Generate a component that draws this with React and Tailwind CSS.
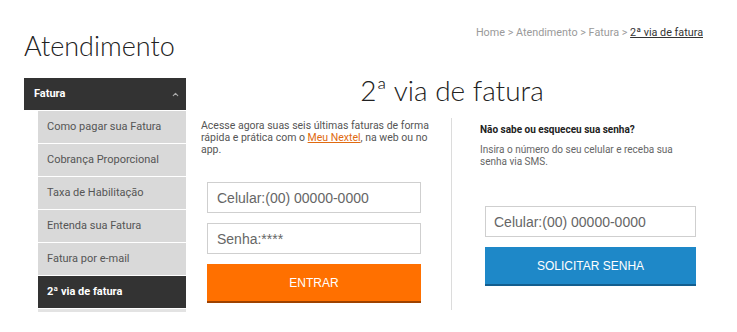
import { ChevronUp } from 'lucide-react';

const itens = [
  'Como pagar sua Fatura',
  'Cobrança Proporcional',
  'Taxa de Habilitação',
  'Entenda sua Fatura',
  'Fatura por e-mail',
];

export default function App() {
  return (
    <div className="w-[737px] h-[332px] overflow-hidden bg-white font-['Roboto',sans-serif]">
      <div className="pl-[24px] pr-[34px]">
        <div className="flex justify-between items-start pt-[26px] h-[78px]">
          <h1 className="font-['Lato',sans-serif] font-light text-[27px] leading-none text-[#222] mt-[6px]">Atendimento</h1>
          <div className="text-[10.8px] leading-[13px] text-[#9a9a9a] font-['Roboto',sans-serif]">
            Home &gt; Atendimento &gt; Fatura &gt;{' '}
            <a className="text-[#333] underline">2ª via de fatura</a>
          </div>
        </div>

        <div className="flex">
          <aside className="w-[162px] shrink-0">
            <div className="h-[32px] bg-[#333333] flex items-center justify-between pl-[10px] pr-[6px]">
              <span className="text-white text-[11px] font-bold">Fatura</span>
              <ChevronUp size={9} strokeWidth={3} className="text-[#aaa]" />
            </div>
            <ul className="ml-[14px]">
              {itens.map((t) => (
                <li key={t} className="h-[33px] bg-[#d9d9d9] border-t border-white flex items-center pl-[9px] text-[11px] text-[#555]">
                  {t}
                </li>
              ))}
              <li className="h-[33px] bg-[#333333] border-t border-white flex items-center pl-[9px] text-[11px] font-bold text-white">
                2ª via de fatura
              </li>
              <li className="h-[4px] bg-[#e3e3e3] border-t border-white"></li>
            </ul>
          </aside>

          <main className="flex-1 ml-[15px]">
            <h2 className="text-center font-['Lato',sans-serif] font-light text-[28px] leading-none text-[#222] -mt-[2px] h-[42px]">
              2ª via de fatura
            </h2>
            <div className="flex">
              <div className="w-[251px] border-r border-[#dcdcdc] h-[192px]">
                <p className="text-[10.5px] leading-[12px] text-[#555] pt-[2px] pr-[8px]">
                  Acesse agora suas seis últimas faturas de forma rápida e prática com o{' '}
                  <a className="text-[#e06a10] underline">Meu Nextel</a>, na web ou no app.
                </p>
                <div className="ml-[6px] w-[214px] mt-[26px] flex flex-col font-['Liberation_Sans',sans-serif]">
                  <input
                    className="h-[31px] border border-[#cfcfcf] px-[9px] text-[14px] text-[#666] placeholder:text-[#666] outline-none"
                    placeholder="Celular:(00) 00000-0000"
                  />
                  <input
                    className="h-[31px] mt-[10px] border border-[#cfcfcf] px-[9px] text-[14px] text-[#666] placeholder:text-[#666] outline-none"
                    placeholder="Senha:****"
                  />
                  <button className="h-[39px] mt-[10px] bg-[#ff7000] border-b-[2px] border-[#9e4200] text-white text-[12px]">
                    ENTRAR
                  </button>
                </div>
              </div>
              <div className="flex-1 pl-[28px]">
                <h3 className="text-[10px] font-bold text-[#222] pt-[6px] leading-[12px]">Não sabe ou esqueceu sua senha?</h3>
                <p className="text-[10px] leading-[12px] text-[#666] mt-[8px] pr-[20px]">
                  Insira o número do seu celular e receba sua senha via SMS.
                </p>
                <div className="ml-[5px] w-[211px] mt-[38px] flex flex-col font-['Liberation_Sans',sans-serif]">
                  <input
                    className="h-[31px] border border-[#cfcfcf] px-[8px] text-[14px] text-[#666] placeholder:text-[#666] outline-none"
                    placeholder="Celular:(00) 00000-0000"
                  />
                  <button className="h-[39px] mt-[10px] bg-[#1e88c8] border-b-[2px] border-[#135e8f] text-white text-[12px]">
                    SOLICITAR SENHA
                  </button>
                </div>
              </div>
            </div>
          </main>
        </div>
      </div>
    </div>
  );
}
